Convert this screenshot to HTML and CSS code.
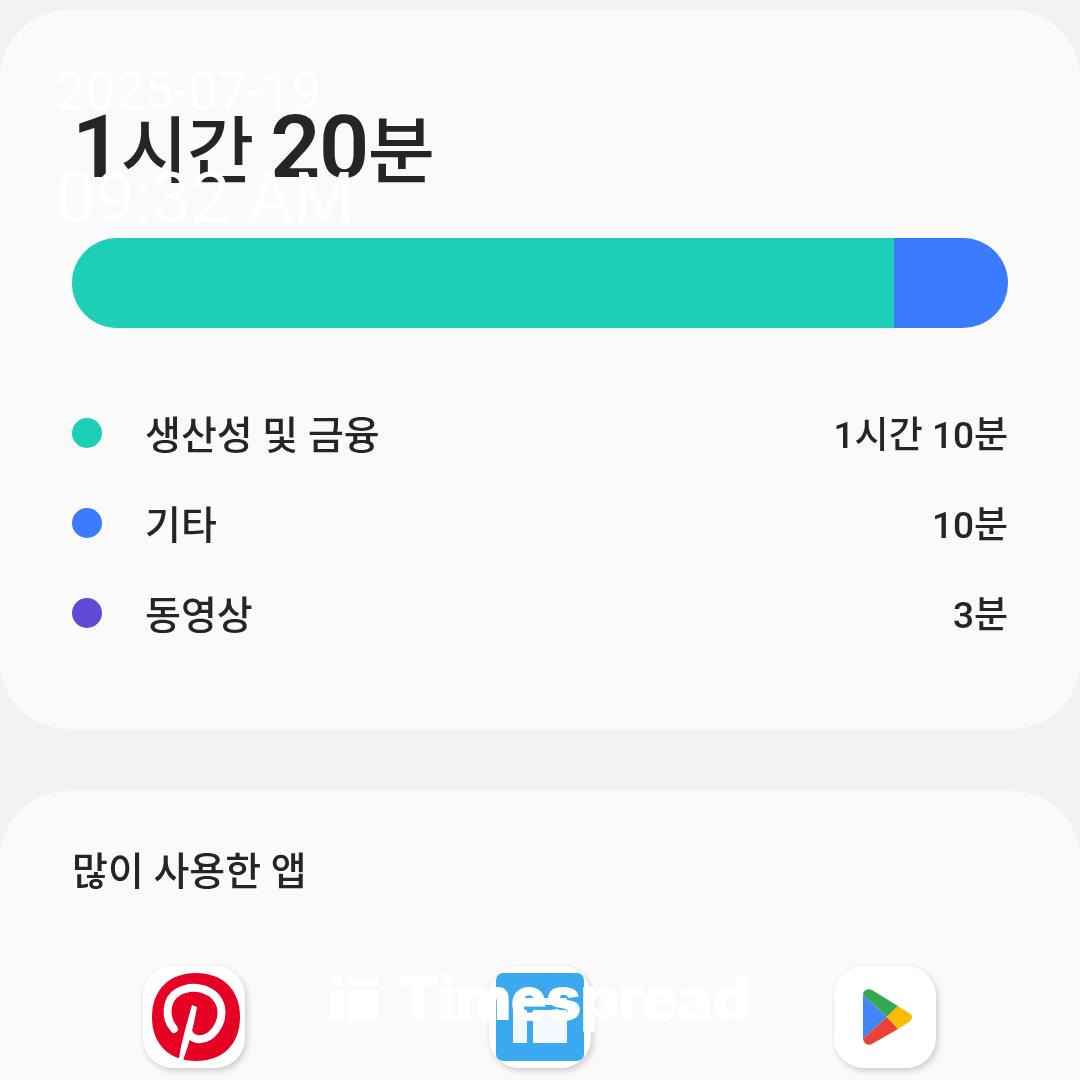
FILE: index.html
```html
<!DOCTYPE html>
<html lang="ko">
<head>
    <meta charset="utf-8">
    <title>Screen Time</title>
    <link rel="stylesheet" href="styles.css">
</head>
<body>
    <div class="screen">
        <section class="card summary">
            <h1 class="total"><b>1</b>시간 <b>20</b>분</h1>
            <div class="bar">
                <div class="bar-green"></div>
                <div class="bar-blue"></div>
            </div>
            <ul class="legend">
                <li class="row"><i class="dot dot-green"></i><span class="label">생산성 및 금융</span><span class="value">1시간 10분</span></li>
                <li class="row"><i class="dot dot-blue"></i><span class="label">기타</span><span class="value">10분</span></li>
                <li class="row"><i class="dot dot-purple"></i><span class="label">동영상</span><span class="value">3분</span></li>
            </ul>
        </section>

        <section class="card apps">
            <h2 class="apps-title">많이 사용한 앱</h2>
            <div class="app-row">
                <!-- pinterest -->
                <div class="app-icon">
                    <svg class="pinterest" viewBox="0 0 88 88" width="88" height="88">
                        <path d="M44 0C70 0 88 16 88 44C88 72 70 88 44 88C18 88 0 72 0 44C0 16 18 0 44 0Z" fill="#e60023"/>
                        <path d="M22 56C12 44 14 26 26 19C42 10 64 16 69 34C72 50 60 68 45 66C41 65 38 63 37 60" fill="none" stroke="#fff" stroke-width="8" stroke-linecap="round"/>
                        <path d="M40 32L45 34C42 52 37 72 31 87L27 86C29 70 35 50 40 32Z" fill="#fff"/>
                    </svg>
                </div>
                <!-- blue app -->
                <div class="app-icon">
                    <svg class="gift" viewBox="0 0 88 88" width="88" height="88">
                        <rect width="88" height="88" rx="7" fill="#3aa9f0"/>
                        <rect x="17" y="37" width="14" height="33" fill="#f3f9fe"/>
                        <rect x="37" y="37" width="34" height="33" fill="#f3f9fe"/>
                        <rect x="17" y="25" width="54" height="7" fill="#f3f9fe"/>
                        <path d="M17 25C20 20 26 20 29 25Z" fill="#e60023"/>
                    </svg>
                </div>
                <!-- play store -->
                <div class="app-icon">
                    <svg class="play" viewBox="0 0 50 56" width="50" height="56">
                        <path d="M0 6C0 1 5 -1 9 1L35 17L24 28Z" fill="#34a853"/>
                        <path d="M0 6V50L24 28Z" fill="#4285f4"/>
                        <path d="M0 50C1 55 5 57 9 55L35 40L24 28Z" fill="#ea4335"/>
                        <path d="M35 17L46 24C50 26 50 30 46 33L35 40L24 28Z" fill="#fbbc04"/>
                    </svg>
                </div>
            </div>
        </section>
    </div>

    <!-- stamp and watermark sit over the screenshot -->
    <div class="stamp">
        <p class="stamp-date">2025-07-19</p>
        <p class="stamp-time">09:32 AM</p>
    </div>
    <div class="watermark">
        <svg viewBox="0 0 48 46" width="48" height="46">
            <circle cx="7" cy="6" r="6" fill="#fff"/>
            <rect x="0" y="16" width="14" height="30" fill="#fff"/>
            <rect x="18" y="2" width="30" height="9" fill="#fff"/>
            <rect x="18" y="16" width="30" height="30" fill="#fff"/>
        </svg>
        <span class="watermark-text">Timespread</span>
    </div>
</body>
</html>
```

FILE: styles.css
```css
*{
    box-sizing:border-box;
}
html,body{
    margin:0;
    padding:0;
}
body{
    width:1080px;
    height:1080px;
    overflow:hidden;
    position:relative;
    background-color:#f2f2f2;
    color:#252525;
    font-family:"Roboto","Noto Sans CJK KR",sans-serif;
}
.screen{
    display:flex;
    flex-direction:column;
    gap:62px;
    padding-top:10px;
    filter:blur(0.4px);
}
.card{
    background-color:#fafafa;
    border-radius:68px;
    padding:0 72px;
}
.summary{
    height:719px;
}
.total{
    margin:0;
    height:228px;
    padding-top:87px;
    font-size:73px;
    line-height:100px;
    font-weight:500;
    letter-spacing:-1px;
    white-space:nowrap;
}
.total b{
    font-size:88px;
    font-weight:600;
    letter-spacing:-1.5px;
}
.bar{
    display:flex;
    height:90px;
    border-radius:45px;
    overflow:hidden;
}
.bar-green{
    width:822px;
    background-color:#1dcfb6;
}
.bar-blue{
    flex:1;
    background-color:#3a7bff;
}
.legend{
    list-style:none;
    margin:60px 0 0;
    padding:0;
}
.row{
    display:flex;
    align-items:center;
    height:90px;
    font-size:39px;
    font-weight:500;
}
.dot{
    width:30px;
    height:30px;
    border-radius:50%;
    margin-right:43px;
}
.dot-green{
    background-color:#1dcfb6;
}
.dot-blue{
    background-color:#3a7bff;
}
.dot-purple{
    background-color:#6149d6;
}
.label{
    flex:1;
    padding-bottom:2px;
}
.value{
    font-size:37px;
    padding-bottom:3px;
}
.apps{
    height:289px;
    border-radius:68px 68px 0 0;
}
.apps-title{
    margin:0;
    padding-top:56px;
    font-size:39px;
    line-height:50px;
    font-weight:500;
}
.app-row{
    display:flex;
    justify-content:space-between;
    margin-top:69px;
    padding:0 0 0 71px;
    width:864px;
}
.app-icon{
    width:102px;
    height:102px;
    border-radius:30px;
    background-color:#fff;
    box-shadow:2px 3px 6px rgba(0,0,0,0.18);
    display:flex;
    align-items:center;
    justify-content:center;
}
.pinterest{
    margin-left:3px;
}
.play{
    margin-left:6px;
}
.stamp{
    position:absolute;
    left:56px;
    top:60px;
    color:#fff;
}
.stamp p{
    margin:0;
    white-space:nowrap;
}
.stamp-date{
    font-size:52.5px;
    line-height:62px;
}
.stamp-time{
    font-size:70px;
    line-height:82px;
    margin-top:35px !important;
}
.watermark{
    position:absolute;
    left:330px;
    top:975px;
    display:flex;
    align-items:center;
    gap:20px;
    color:#fff;
}
.watermark-text{
    font-family:"Inter","Roboto",sans-serif;
    font-size:60px;
    line-height:46px;
    font-weight:900;
    letter-spacing:-1px;
}
```
